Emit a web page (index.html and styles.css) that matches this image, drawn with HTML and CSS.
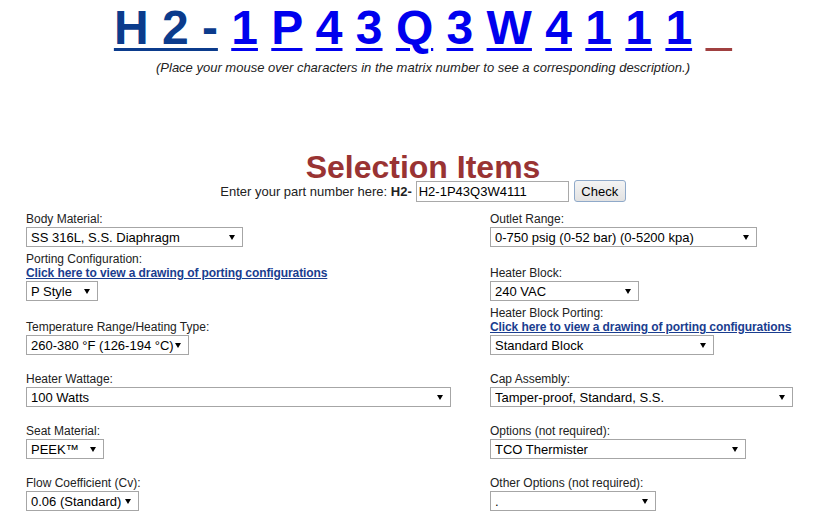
FILE: index.html
```html
<!DOCTYPE html>
<html lang="en">
<head>
    <meta charset="UTF-8">
    <title>Part Number Configurator</title>
    <link rel="stylesheet" href="styles.css">
</head>
<body>
    <div class="page">
        <div class="matrix"><a href="#" class="prefix">H 2 -</a> <a href="#">1</a> <a href="#">P</a> <a href="#">4</a> <a href="#">3</a> <a href="#">Q</a> <a href="#">3</a> <a href="#">W</a> <a href="#">4</a> <a href="#">1</a> <a href="#">1</a> <a href="#">1</a> <span class="blank">&nbsp;&nbsp;</span></div>
        <p class="hint">(Place your mouse over characters in the matrix number to see a corresponding description.)</p>

        <h1 class="title">Selection Items</h1>
        <div class="part-row">
            <span>Enter your part number here: <b>H2-</b></span>
            <input type="text" class="part-input" value="H2-1P43Q3W4111">
            <button class="check-btn">Check</button>
        </div>

        <div class="form-grid">
            <div class="cell">
                <div class="label">Body Material:</div>
                <span class="pick w-body"><select><option>SS 316L, S.S. Diaphragm</option></select></span>
            </div>
            <div class="cell">
                <div class="label">Outlet Range:</div>
                <span class="pick w-outlet"><select><option>0-750 psig (0-52 bar) (0-5200 kpa)</option></select></span>
            </div>

            <div class="cell">
                <div class="label">Porting Configuration:</div>
                <a href="#" class="drawing-link">Click here to view a drawing of porting configurations</a>
                <span class="pick w-porting"><select><option>P Style</option></select></span>
            </div>
            <div class="cell">
                <div class="label">Heater Block:</div>
                <span class="pick w-block"><select><option>240 VAC</option></select></span>
            </div>

            <div class="cell">
                <div class="label">Temperature Range/Heating Type:</div>
                <span class="pick w-temp"><select><option>260-380 °F (126-194 °C)</option></select></span>
            </div>
            <div class="cell">
                <div class="label">Heater Block Porting:</div>
                <a href="#" class="drawing-link">Click here to view a drawing of porting configurations</a>
                <span class="pick w-blockport"><select><option>Standard Block</option></select></span>
            </div>

            <div class="cell">
                <div class="label">Heater Wattage:</div>
                <span class="pick w-watt"><select><option>100 Watts</option></select></span>
            </div>
            <div class="cell">
                <div class="label">Cap Assembly:</div>
                <span class="pick w-cap"><select><option>Tamper-proof, Standard, S.S.</option></select></span>
            </div>

            <div class="cell">
                <div class="label">Seat Material:</div>
                <span class="pick w-seat"><select><option>PEEK™</option></select></span>
            </div>
            <div class="cell">
                <div class="label">Options (not required):</div>
                <span class="pick w-options"><select><option>TCO Thermister</option></select></span>
            </div>

            <div class="cell">
                <div class="label">Flow Coefficient (Cv):</div>
                <span class="pick w-flow"><select><option>0.06 (Standard)</option></select></span>
            </div>
            <div class="cell">
                <div class="label">Other Options (not required):</div>
                <span class="pick w-other"><select><option>.</option></select></span>
            </div>
        </div>
    </div>
</body>
</html>
```

FILE: styles.css
```css
* {
    margin: 0;
    padding: 0;
    box-sizing: border-box;
}

body {
    font-family: "Liberation Sans", Arial, sans-serif;
    color: #222;
    background: #fff;
}

.page {
    padding-left: 16px;
}

/* matrix number */
.matrix {
    text-align: center;
    font-size: 48px;
    font-weight: bold;
    white-space: nowrap;
}

.matrix a,
.matrix a:visited {
    color: #0000ee;
    text-decoration: underline;
    text-decoration-thickness: 3px;
    text-underline-offset: 4px;
}

.matrix a.prefix {
    color: #0b3b8c;
}

.matrix .blank {
    color: #a04040;
    text-decoration: underline;
    text-decoration-thickness: 3px;
    text-underline-offset: 4px;
}

.hint {
    text-align: center;
    font-size: 13px;
    font-style: italic;
    line-height: 15px;
    margin-top: 5px;
}

.title {
    text-align: center;
    font-size: 32px;
    line-height: 28px;
    color: #993333;
    margin-top: 78px;
}

.part-row {
    display: flex;
    justify-content: center;
    align-items: center;
    font-size: 13px;
    margin-top: -1px;
    height: 22px;
}

.part-input {
    width: 153px;
    height: 21px;
    margin-left: 4px;
    padding-left: 2px;
    border: 1px solid #a9a9a9;
    font-family: inherit;
    font-size: 13px;
    color: #000;
}

.check-btn {
    width: 52px;
    height: 22px;
    margin-left: 5px;
    border: 1px solid #8fa9c9;
    border-radius: 3px;
    background: linear-gradient(#f4f4f4, #e2e2e2);
    font-family: inherit;
    font-size: 13px;
    color: #000;
}

/* selection grid */
.form-grid {
    display: grid;
    grid-template-columns: 464px 1fr;
    grid-template-rows: 49px 54px 54px 52px 52px 52px;
    align-items: end;
    margin-left: 10px;
}

.cell {
    padding-bottom: 4px;
}

.label {
    font-size: 12px;
    line-height: 14px;
}

.drawing-link,
.drawing-link:visited {
    display: block;
    font-size: 12px;
    font-weight: bold;
    line-height: 14px;
    letter-spacing: -0.1px;
    color: #1a3d8f;
}

.pick {
    position: relative;
    display: block;
    margin-top: 1px;
}

.pick::after {
    content: "";
    position: absolute;
    right: 8px;
    top: 8px;
    border-left: 3px solid transparent;
    border-right: 3px solid transparent;
    border-top: 5px solid #000;
    pointer-events: none;
}

.pick select {
    appearance: none;
    -webkit-appearance: none;
    display: block;
    width: 100%;
    height: 20px;
    padding-left: 4px;
    border: 1px solid #a6a6a6;
    border-radius: 0;
    background: #fff;
    font-family: inherit;
    font-size: 13px;
    color: #000;
}

.w-body { width: 217px; }
.w-porting { width: 72px; }
.w-temp { width: 163px; }
.w-watt { width: 425px; }
.w-seat { width: 78px; }
.w-flow { width: 113px; }
.w-outlet { width: 267px; }
.w-block { width: 149px; }
.w-blockport { width: 224px; }
.w-cap { width: 303px; }
.w-options { width: 256px; }
.w-other { width: 166px; }
```
